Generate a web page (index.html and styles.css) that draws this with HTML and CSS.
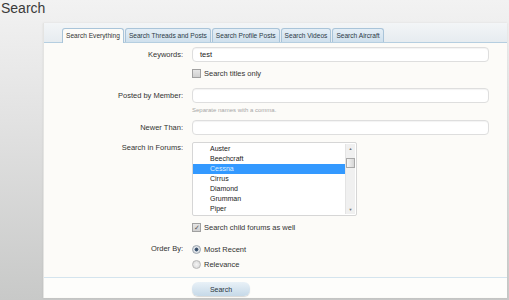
FILE: index.html
```html
<!DOCTYPE html>
<html lang="en">
<head>
    <meta charset="UTF-8">
    <title>Search</title>
    <link rel="stylesheet" href="styles.css">
</head>
<body>
    <h1 class="title">Search</h1>

    <div class="panel">
        <ul class="tabs">
            <li class="tab active">Search Everything</li>
            <li class="tab">Search Threads and Posts</li>
            <li class="tab">Search Profile Posts</li>
            <li class="tab">Search Videos</li>
            <li class="tab">Search Aircraft</li>
        </ul>

        <form class="search-form">
            <div class="row row-keywords">
                <label class="label">Keywords:</label>
                <div class="field"><div class="text-input">test</div></div>
            </div>

            <div class="row row-check">
                <span class="label"></span>
                <div class="field">
                    <span class="check"><span class="box"></span>Search titles only</span>
                </div>
            </div>

            <div class="row row-member">
                <label class="label">Posted by Member:</label>
                <div class="field">
                    <div class="text-input"></div>
                    <p class="hint">Separate names with a comma.</p>
                </div>
            </div>

            <div class="row row-newer">
                <label class="label">Newer Than:</label>
                <div class="field"><div class="text-input"></div></div>
            </div>

            <div class="row row-forums">
                <label class="label">Search in Forums:</label>
                <div class="field">
                    <div class="listbox">
                        <ul class="options">
                            <li>Auster</li>
                            <li>Beechcraft</li>
                            <li class="selected">Cessna</li>
                            <li>Cirrus</li>
                            <li>Diamond</li>
                            <li>Grumman</li>
                            <li>Piper</li>
                        </ul>
                        <div class="scrollbar">
                            <span class="arrow">&#9650;</span>
                            <span class="thumb"></span>
                            <span class="arrow arrow-down">&#9660;</span>
                        </div>
                    </div>
                </div>
            </div>

            <div class="row row-child">
                <span class="label"></span>
                <div class="field">
                    <span class="check"><span class="box checked">&#10003;</span>Search child forums as well</span>
                </div>
            </div>

            <div class="row row-order">
                <label class="label">Order By:</label>
                <div class="field">
                    <span class="radio"><span class="dot on"></span>Most Recent</span>
                    <span class="radio"><span class="dot"></span>Relevance</span>
                </div>
            </div>

            <div class="submit-bar">
                <button type="button" class="btn">Search</button>
            </div>
        </form>
    </div>
</body>
</html>
```

FILE: styles.css
```css
* {
    margin: 0;
    padding: 0;
    box-sizing: border-box;
}

html, body {
    height: 300px;
    overflow: hidden;
}

body {
    font-family: "Liberation Sans", Arial, sans-serif;
    background: linear-gradient(to bottom, #f2f2f2 0%, #e2e2e2 40%, #c8c9c8 100%);
    color: #333;
}

.title {
    font-size: 14px;
    font-weight: normal;
    color: #3a3a3a;
    line-height: 17px;
    padding-left: 1px;
    height: 23px;
}

.panel {
    margin-left: 43px;
    margin-right: 2px;
    height: 275px;
    background: #fcfbf8;
    border-left: 1px solid #e4e4e2;
    box-shadow: 0 0 2px rgba(0, 0, 0, 0.08);
}

/* tabs */
.tabs {
    list-style: none;
    display: flex;
    align-items: flex-end;
    height: 20px;
    padding-left: 18px;
    background: linear-gradient(to bottom, #f3f5f7, #e6ecf0);
    border-bottom: 1px solid #b5cee0;
}

.tab {
    font-size: 6.6px;
    line-height: 13px;
    height: 14px;
    padding: 0 3px;
    margin-right: 1px;
    color: #2c3a46;
    background: linear-gradient(to bottom, #e4eef6, #cfe0ed);
    border: 1px solid #a9c4d9;
    border-bottom: none;
    border-radius: 3px 3px 0 0;
    white-space: nowrap;
}

.tab.active {
    background: #fcfbf8;
    height: 15px;
    margin-bottom: -1px;
    color: #333;
}

/* form rows */
.search-form {
    padding-top: 4px;
}

.row {
    display: grid;
    grid-template-columns: 139px 297px;
    column-gap: 9px;
    font-size: 7.5px;
}

.label {
    text-align: right;
    color: #333;
    line-height: 15px;
}

.text-input {
    height: 15px;
    background: #fff;
    border: 1px solid #dedede;
    border-radius: 4px;
    padding-left: 7px;
    line-height: 13px;
    color: #222;
    box-shadow: inset 0 1px 1px rgba(0, 0, 0, 0.05);
}

.row-check {
    margin-top: 6px;
}

.row-member {
    margin-top: 9px;
}

.hint {
    font-size: 6px;
    color: #a7a7a7;
    line-height: 8px;
    margin-top: 3px;
}

.row-newer {
    margin-top: 6px;
}

.row-forums {
    margin-top: 7px;
}

.row-forums .label {
    line-height: 12px;
}

.row-child {
    margin-top: 6px;
}

.row-order {
    margin-top: 11px;
}

.check, .radio {
    display: flex;
    align-items: center;
    height: 11px;
    color: #333;
}

.radio {
    height: 18px;
}

.row-order .label {
    line-height: 11px;
    margin-top: -1px;
}

.row-order .field .radio:first-child {
    height: 11px;
}

.box {
    width: 9px;
    height: 9px;
    margin-right: 3px;
    border: 1px solid #a0a0a0;
    background: linear-gradient(to bottom, #e6e6e6, #d0d0d0);
    font-size: 7px;
    line-height: 7px;
    text-align: center;
    color: #555;
}

.dot {
    width: 9px;
    height: 9px;
    margin-right: 3px;
    border-radius: 50%;
    border: 1px solid #b8b8b8;
    background: radial-gradient(circle, #f4f4f4 0%, #d4d4d4 100%);
}

.dot.on {
    background: radial-gradient(circle, #33445a 0%, #4a6380 35%, #d8dde3 45%, #e8e8e8 100%);
    border-color: #9aa4ae;
}

/* forum list */
.listbox {
    display: flex;
    width: 165px;
    height: 74px;
    background: #fff;
    border: 1px solid #d6d6d6;
    border-radius: 2px;
}

.options {
    list-style: none;
    flex: 1;
    padding-top: 1px;
}

.options li {
    height: 10px;
    line-height: 10px;
    padding-left: 17px;
    font-size: 7px;
    color: #222;
}

.options li.selected {
    background: #3399ff;
    color: #dfefff;
}

.scrollbar {
    width: 10px;
    margin: 1px 1px 1px 0;
    background: #f0f0f0;
    border-left: 1px solid #e4e4e4;
    display: flex;
    flex-direction: column;
    align-items: center;
}

.arrow {
    font-size: 4px;
    line-height: 9px;
    color: #777;
}

.arrow-down {
    margin-top: auto;
}

.thumb {
    width: 9px;
    height: 10px;
    margin-top: 5px;
    background: linear-gradient(to right, #f6f6f6, #d6d6d6);
    border: 1px solid #a8a8a8;
}

/* submit */
.submit-bar {
    margin-top: 4px;
    border-top: 1px solid #d4e4ee;
    background: #fdfdfb;
    padding: 4px 0 0 148px;
    height: 20px;
}

.btn {
    display: block;
    width: 58px;
    height: 14px;
    font-family: "Liberation Sans", Arial, sans-serif;
    font-size: 7px;
    color: #2b3540;
    border: none;
    border-radius: 6px;
    background: linear-gradient(to bottom, #e9f1f7, #c6d9e8);
    box-shadow: 0 1px 1px rgba(0, 0, 0, 0.15);
}
```
